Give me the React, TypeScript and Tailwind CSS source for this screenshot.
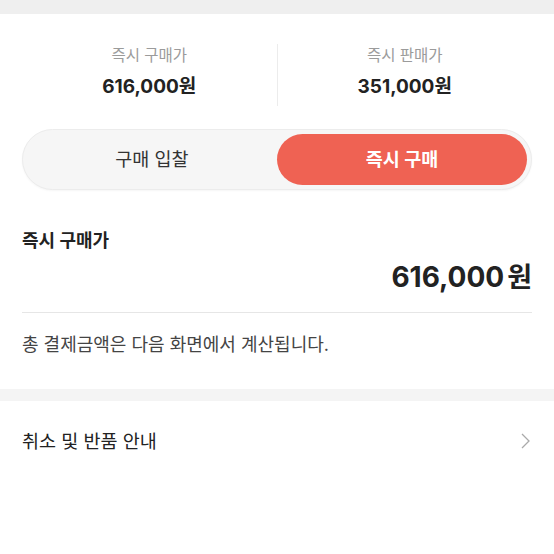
import React from "react";

const font = { fontFamily: '"Inter", "Noto Sans CJK KR", sans-serif' };

export default function App() {
  return (
    <div className="w-[554px] h-[554px] bg-white overflow-hidden" style={font}>
      <div className="h-[14px] bg-[#efefef]" />
      <div className="flex px-[22px] pt-[30px]">
        <div className="flex-1 h-[62px] flex flex-col items-center pt-[1px]">
          <div className="text-[15.5px] leading-[21px] text-[#9b9b9b]">즉시 구매가</div>
          <div className="mt-[8px] text-[19px] leading-[25px] font-bold text-[#222]">616,000원</div>
        </div>
        <div className="w-px h-[62px] bg-[#ececec]" />
        <div className="flex-1 h-[62px] flex flex-col items-center pt-[1px]">
          <div className="text-[15.5px] leading-[21px] text-[#9b9b9b]">즉시 판매가</div>
          <div className="mt-[8px] text-[19px] leading-[25px] font-bold text-[#222]">351,000원</div>
        </div>
      </div>
      <div className="px-[22px] mt-[23px]">
        <div className="h-[61px] rounded-full bg-[#f6f6f6] border border-[#ececec] p-[4px] flex shadow-[0_1px_2px_rgba(0,0,0,0.04)]">
          <div className="flex-1 flex items-center justify-center text-[18.5px] text-[#333]">구매 입찰</div>
          <div className="flex-1 flex items-center justify-center rounded-full bg-[#ef6253] text-white text-[18.5px] font-bold">즉시 구매</div>
        </div>
      </div>
      <div className="px-[22px]">
        <div className="mt-[38px] text-[18px] leading-[25px] font-bold text-[#222]">즉시 구매가</div>
        <div className="mt-[8px] flex justify-end items-baseline text-[#222] font-bold">
          <span className="text-[28px] leading-[32px]">616,000</span>
          <span className="ml-[3px] text-[27px] leading-[32px]">원</span>
        </div>
        <div className="mt-[18px] h-px bg-[#e6e6e6]" />
        <div className="mt-[20px] text-[18px] leading-[24px] text-[#444]">총 결제금액은 다음 화면에서 계산됩니다.</div>
      </div>
      <div className="mt-[32px] h-[12px] bg-[#f4f4f4]" />
      <div className="px-[22px] mt-[27px] flex items-center justify-between">
        <div className="text-[18.5px] leading-[26px] text-[#222]">취소 및 반품 안내</div>
        <svg width="12" height="18" viewBox="0 0 12 18" className="mr-[1px]">
          <path d="M3 2 L10 9 L3 16" fill="none" stroke="#aaaaaa" strokeWidth="1.3" />
        </svg>
      </div>
    </div>
  );
}
